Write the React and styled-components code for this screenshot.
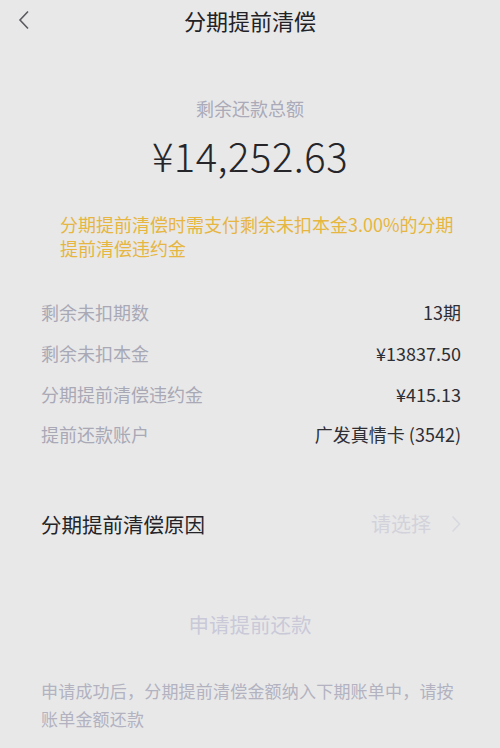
import styled, { createGlobalStyle } from "styled-components";

const GlobalStyle = createGlobalStyle`
  html, body {
    margin: 0;
    padding: 0;
    background: #e8e8e9;
  }
  body {
    font-family: "Noto Sans CJK SC", "Noto Sans", sans-serif;
  }
`;

const Page = styled.div`
  width: 500px;
  height: 748px;
  overflow: hidden;
  background: #e8e8e9;
`;

const Header = styled.header`
  position: relative;
  height: 40px;
  display: flex;
  align-items: center;
  justify-content: center;
`;

const BackButton = styled.button`
  position: absolute;
  left: 14px;
  top: 8px;
  width: 20px;
  height: 24px;
  padding: 0;
  border: 0;
  background: transparent;
  display: flex;
  align-items: center;
  justify-content: center;
`;

const Title = styled.h1`
  margin: 0;
  font-size: 22px;
  font-weight: 400;
  color: #222226;
  line-height: 40px;
`;

const Summary = styled.section`
  margin-top: 55px;
  display: flex;
  flex-direction: column;
  align-items: center;
`;

const SummaryLabel = styled.div`
  font-size: 18px;
  line-height: 26px;
  color: #aaaab8;
`;

const Amount = styled.div`
  margin-top: 10px;
  font-size: 40px;
  font-weight: 300;
  line-height: 48px;
  color: #26262a;
  letter-spacing: 0.5px;
`;

const Notice = styled.p`
  margin: 33px 0 0;
  padding: 0 40px 0 60px;
  font-size: 18px;
  line-height: 24px;
  color: #e6b640;
`;

const InfoList = styled.div`
  margin-top: 32px;
  padding: 0 39px 0 41px;
`;

const InfoRow = styled.div`
  height: 40.7px;
  display: flex;
  align-items: center;
  justify-content: space-between;
  font-size: 18px;
`;

const InfoLabel = styled.span`
  color: #a9a9b6;
`;

const InfoValue = styled.span`
  color: #2e2e33;
`;

const ReasonRow = styled.div`
  margin-top: 44px;
  height: 50px;
  padding: 0 39px 0 41px;
  display: flex;
  align-items: center;
  justify-content: space-between;
`;

const ReasonLabel = styled.span`
  font-size: 20.5px;
  color: #242428;
`;

const Picker = styled.span`
  display: flex;
  align-items: center;
  gap: 20px;
  font-size: 20px;
  color: #d2d2da;
`;

const SubmitButton = styled.button`
  display: block;
  margin: 61px auto 0;
  padding: 0;
  border: 0;
  background: transparent;
  font-family: inherit;
  font-size: 20.5px;
  line-height: 28px;
  color: #c9c9d8;
`;

const Footnote = styled.p`
  margin: 39px 0 0;
  padding: 0 40px 0 41px;
  font-size: 17px;
  line-height: 28px;
  color: #b2b2c0;
  letter-spacing: 0.2px;
`;

const rows = [
  ["剩余未扣期数", "13期"],
  ["剩余未扣本金", "¥13837.50"],
  ["分期提前清偿违约金", "¥415.13"],
  ["提前还款账户", "广发真情卡 (3542)"],
];

export default function App() {
  return (
    <Page>
      <GlobalStyle />
      <Header>
        <BackButton aria-label="返回">
          <svg width="12" height="20" viewBox="0 0 12 20">
            <path d="M10 1.5 L2 10 L10 18.5" fill="none" stroke="#5a5a60" strokeWidth="1.6" />
          </svg>
        </BackButton>
        <Title>分期提前清偿</Title>
      </Header>

      <Summary>
        <SummaryLabel>剩余还款总额</SummaryLabel>
        <Amount>¥14,252.63</Amount>
      </Summary>

      <Notice>分期提前清偿时需支付剩余未扣本金3.00%的分期提前清偿违约金</Notice>

      <InfoList>
        {rows.map(([label, value]) => (
          <InfoRow key={label}>
            <InfoLabel>{label}</InfoLabel>
            <InfoValue>{value}</InfoValue>
          </InfoRow>
        ))}
      </InfoList>

      <ReasonRow>
        <ReasonLabel>分期提前清偿原因</ReasonLabel>
        <Picker>
          请选择
          <svg width="10" height="18" viewBox="0 0 10 18">
            <path d="M1.5 1.5 L8.5 9 L1.5 16.5" fill="none" stroke="#d8d8e0" strokeWidth="1.6" />
          </svg>
        </Picker>
      </ReasonRow>

      <SubmitButton>申请提前还款</SubmitButton>

      <Footnote>申请成功后，分期提前清偿金额纳入下期账单中，请按账单金额还款</Footnote>
    </Page>
  );
}
